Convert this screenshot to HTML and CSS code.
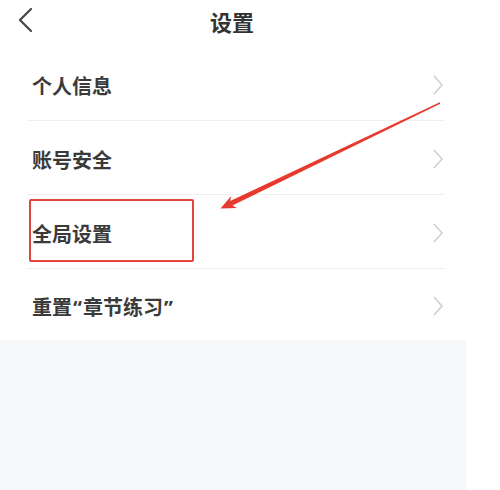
FILE: index.html
```html
<!DOCTYPE html>
<html lang="zh-CN">
<head>
<meta charset="utf-8">
<title>设置</title>
<link rel="stylesheet" href="styles.css">
</head>
<body>
<div class="page">
  <header class="topbar">
    <svg class="back" width="16" height="26" viewBox="0 0 16 26"><path d="M14 2 L3 13 L14 24" fill="none" stroke="#444" stroke-width="2.2" stroke-linecap="round" stroke-linejoin="round"/></svg>
    <h1 class="title">设置</h1>
  </header>
  <ul class="list">
    <li class="row"><span class="label">个人信息</span><svg class="chev" width="10" height="20" viewBox="0 0 10 20"><path d="M1 1 L9 10 L1 19" fill="none" stroke="#cfcfcf" stroke-width="1.6"/></svg></li>
    <li class="row"><span class="label">账号安全</span><svg class="chev" width="10" height="20" viewBox="0 0 10 20"><path d="M1 1 L9 10 L1 19" fill="none" stroke="#cfcfcf" stroke-width="1.6"/></svg></li>
    <li class="row"><span class="label">全局设置</span><svg class="chev" width="10" height="20" viewBox="0 0 10 20"><path d="M1 1 L9 10 L1 19" fill="none" stroke="#cfcfcf" stroke-width="1.6"/></svg></li>
    <li class="row"><span class="label">重置<span class="q">“</span>章节练习<span class="q">”</span></span><svg class="chev" width="10" height="20" viewBox="0 0 10 20"><path d="M1 1 L9 10 L1 19" fill="none" stroke="#cfcfcf" stroke-width="1.6"/></svg></li>
  </ul>
  <div class="gray"></div>
  <div class="highlight"></div>
  <svg class="arrow" width="500" height="490" viewBox="0 0 500 490"><polygon points="439.8,102.3 230.2,201.0 231.2,196.1 220.5,208.5 236.8,207.9 232.4,205.6 440.2,103.7" fill="#e8392f"/></svg>
</div>
</body>
</html>
```
FILE: styles.css
```css
html, body {
  margin: 0;
  padding: 0;
  background: #ffffff;
}
.page {
  position: relative;
  width: 500px;
  height: 490px;
  overflow: hidden;
  font-family: "Noto Sans CJK SC", "Noto Sans", sans-serif;
  display: flex;
  flex-direction: column;
}
.topbar {
  height: 47px;
  display: flex;
  align-items: center;
  justify-content: center;
  position: relative;
  flex: none;
}
.back {
  position: absolute;
  left: 17px;
  top: 7px;
}
.title {
  margin: 0 36px 6px 0;
  font-size: 22px;
  font-weight: 700;
  color: #333;
  line-height: 1;
}
.list {
  list-style: none;
  margin: 0 55px 0 27px;
  padding: 0;
  flex: none;
}
.row {
  height: 73px;
  display: flex;
  align-items: center;
  justify-content: space-between;
  border-bottom: 1px solid #efefef;
  padding: 0 2px 0 5px;
}
.row:last-child {
  border-bottom: none;
  height: 71px;
}
.label {
  font-size: 20px;
  font-weight: 700;
  color: #3a3a3a;
  line-height: 1;
  padding-top: 5px;
}
.q {
  font-family: "Noto Sans", "DejaVu Sans", sans-serif;
  padding: 0 1px;
}
.chev {
  margin-top: 2px;
}
.gray {
  flex: 1;
  width: 466px;
  background: #f6f8fa;
}
.highlight {
  position: absolute;
  left: 29px;
  top: 199px;
  width: 161px;
  height: 59px;
  border: 2px solid #e4443c;
  border-radius: 2px;
}
.arrow {
  position: absolute;
  left: 0;
  top: 0;
}
```
